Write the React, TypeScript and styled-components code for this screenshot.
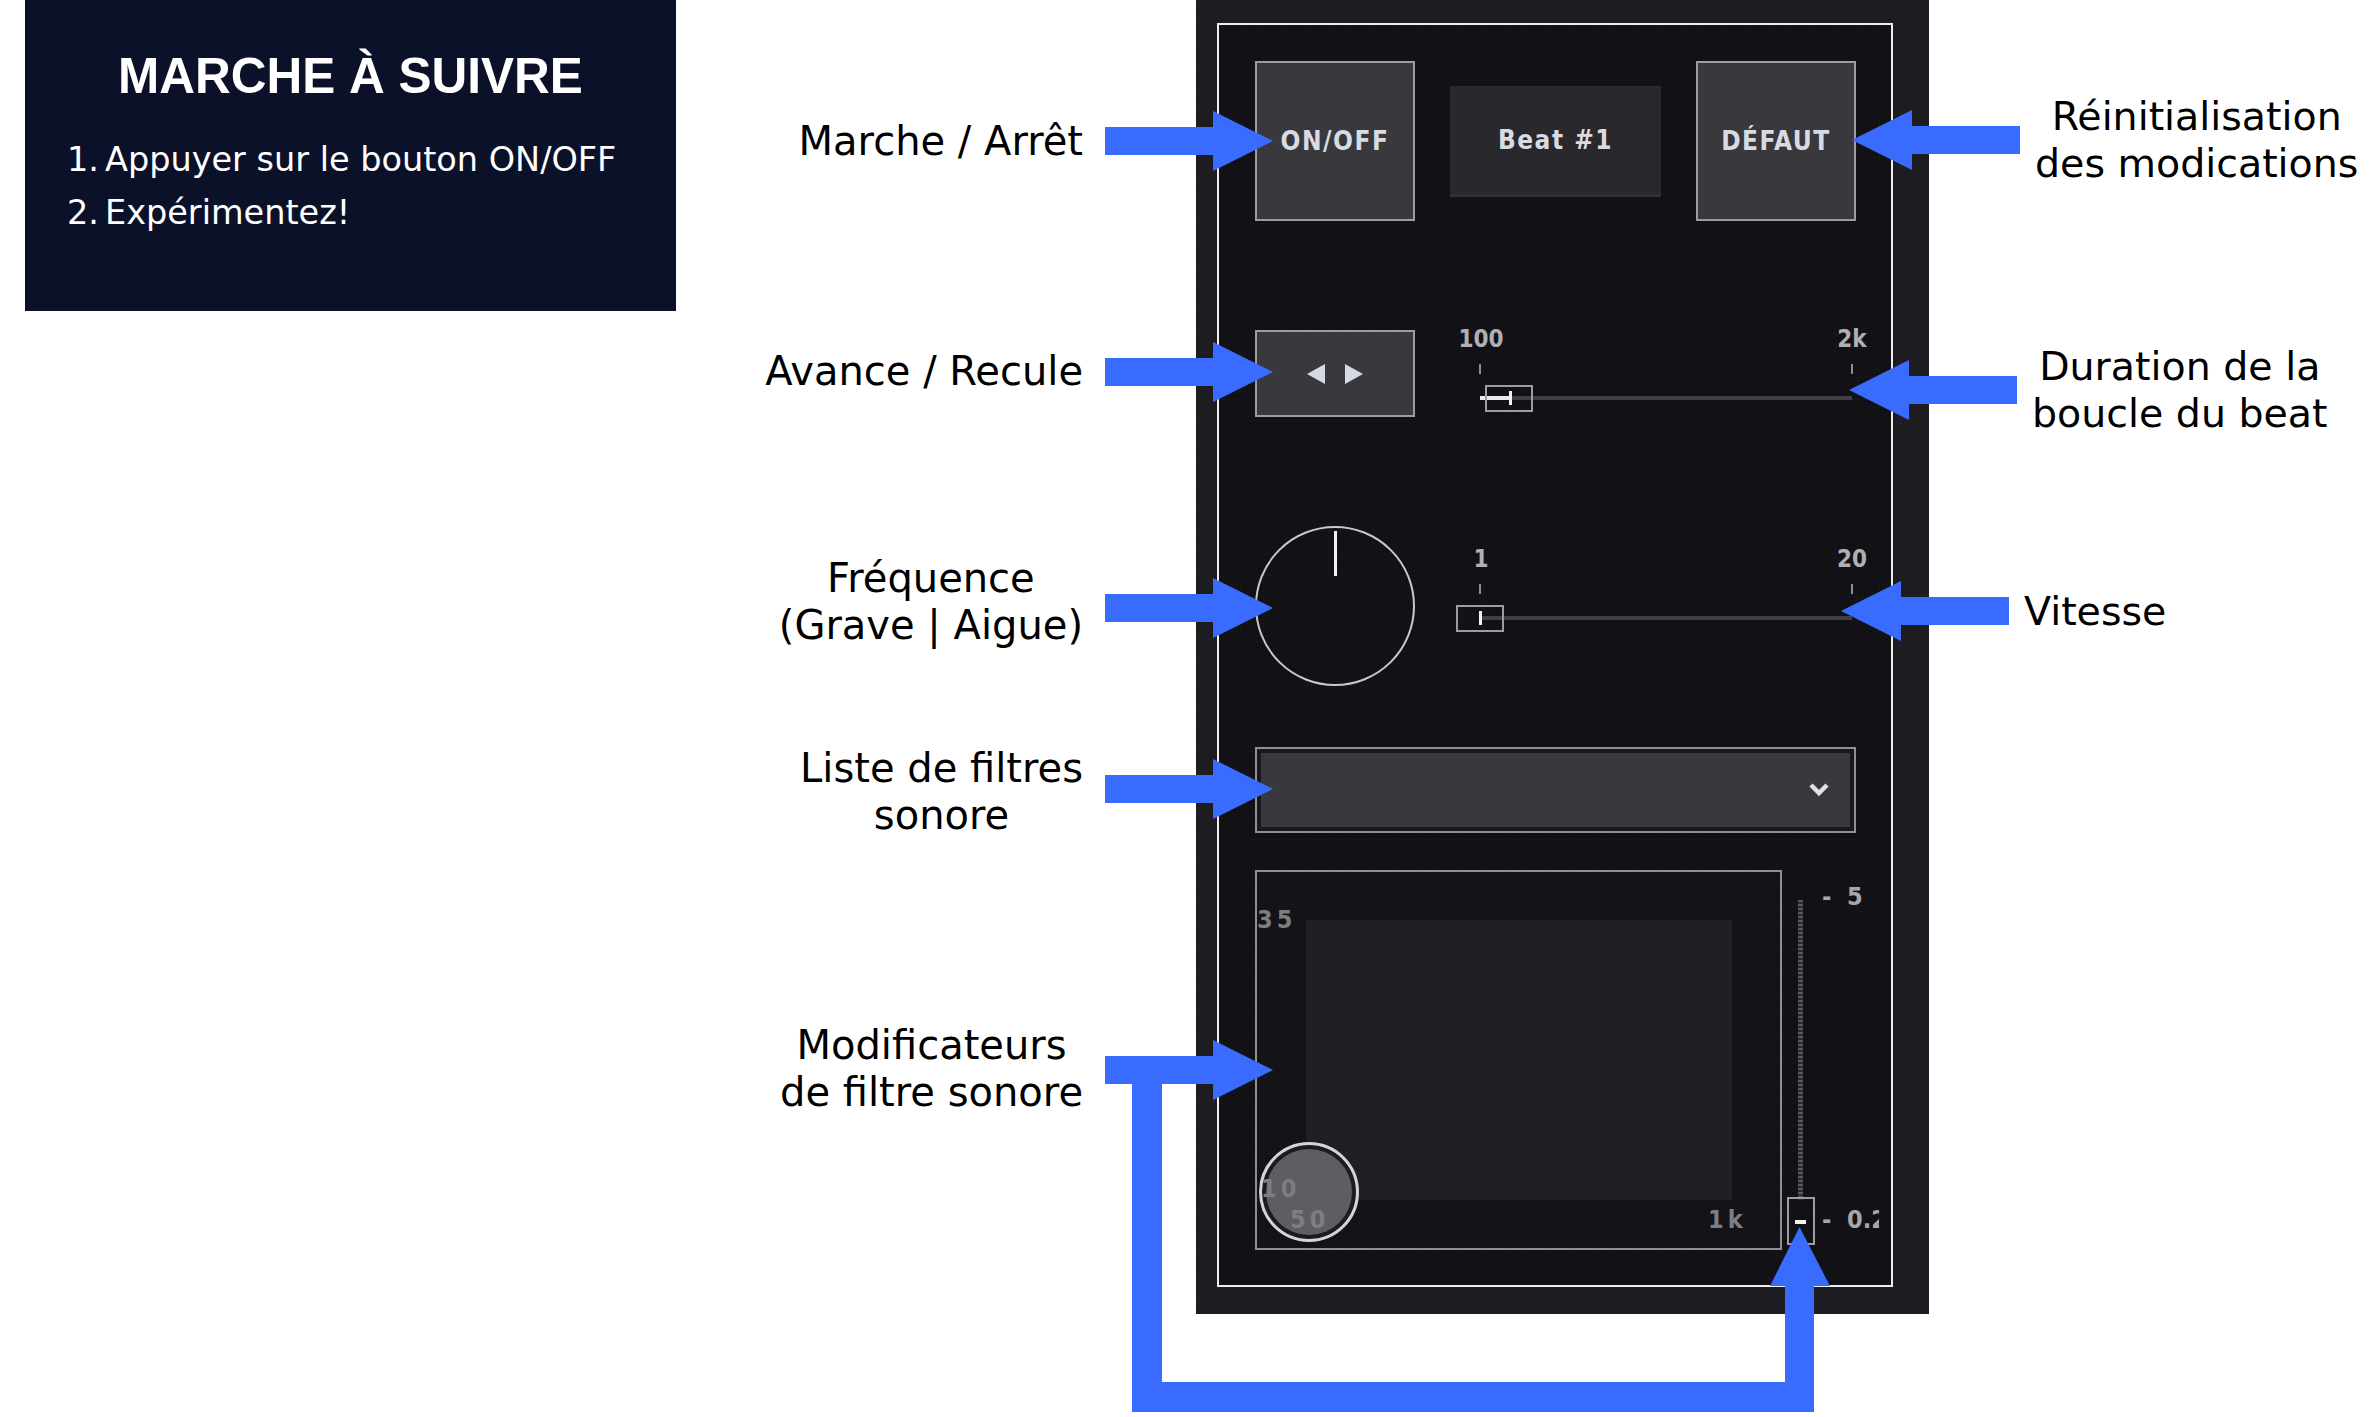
import styled, { createGlobalStyle } from 'styled-components'

const BLUE = '#386bfe'
const COND = `"DejaVu Sans Condensed", "DejaVu Sans", sans-serif`
const LABEL_FONT = `"DejaVu Sans", "Noto Sans", sans-serif`

// vertical tracks shared by the panel and the callout columns (absolute top, height)
const ROWS = [
  { top: 61, h: 160 },
  { top: 330, h: 87 },
  { top: 526, h: 160 },
  { top: 747, h: 86 },
  { top: 870, h: 380 },
]
const gapBefore = (i: number) => (i === 0 ? ROWS[0].top : ROWS[i].top - (ROWS[i - 1].top + ROWS[i - 1].h))

const GlobalStyle = createGlobalStyle`
  html, body {
    margin: 0;
    padding: 0;
    overflow: hidden;
    background: #ffffff;
  }
  body {
    width: 2376px;
    height: 1417px;
  }
`

const Page = styled.div`
  display: flex;
  align-items: flex-start;
  width: 2376px;
  height: 1417px;
`

const Instructions = styled.div`
  flex-shrink: 0;
  box-sizing: border-box;
  width: 651px;
  height: 311px;
  margin-left: 25px;
  padding: 46px 0 0 42px;
  background: #0b1129;
  color: #ffffff;
`

const Title = styled.h1`
  margin: 0 0 0 -42px;
  font-family: "Liberation Sans", Arial, sans-serif;
  font-weight: 700;
  font-size: 49.5px;
  line-height: 60px;
  text-align: center;
`

const Steps = styled.ol`
  list-style: none;
  margin: 27px 0 0;
  padding: 0;
  font-family: ${LABEL_FONT};
  font-size: 33.5px;
  line-height: 53px;
  white-space: nowrap;
`

const StepNum = styled.span`
  display: inline-block;
  width: 38px;
`

const Figure = styled.div`
  position: relative;
  display: flex;
  flex-shrink: 0;
  width: 1700px;
  height: 1417px;
`

const CalloutColumn = styled.div<{ $w: number }>`
  display: flex;
  flex-direction: column;
  flex-shrink: 0;
  width: ${({ $w }) => $w}px;
  overflow: visible;
`

const CalloutRow = styled.div<{ $gap: number; $h: number; $shift: number; $side: 'left' | 'right' }>`
  display: flex;
  align-items: center;
  justify-content: ${({ $side }) => ($side === 'left' ? 'flex-end' : 'flex-start')};
  gap: ${({ $side }) => ($side === 'left' ? 22 : 15)}px;
  box-sizing: border-box;
  height: ${({ $h }) => $h}px;
  margin-top: ${({ $gap }) => $gap}px;
  padding-top: ${({ $shift }) => ($shift > 0 ? $shift * 2 : 0)}px;
  padding-bottom: ${({ $shift }) => ($shift < 0 ? -$shift * 2 : 0)}px;
`

const Label = styled.div<{ $size: number; $lift: number }>`
  margin-bottom: ${({ $lift }) => ($lift > 0 ? $lift * 2 : 0)}px;
  margin-top: ${({ $lift }) => ($lift < 0 ? -$lift * 2 : 0)}px;
  font-family: ${LABEL_FONT};
  font-size: ${({ $size }) => $size}px;
  line-height: 47px;
  color: #000000;
  text-align: center;
  white-space: nowrap;
`

const ArrowSvg = styled.svg<{ $pull: number; $side: 'left' | 'right' }>`
  position: relative;
  z-index: 2;
  flex-shrink: 0;
  margin-right: ${({ $side, $pull }) => ($side === 'left' ? -$pull : 0)}px;
  margin-left: ${({ $side, $pull }) => ($side === 'right' ? -$pull : 0)}px;
`

const Arrow = ({ side, pull }: { side: 'left' | 'right'; pull: number }) => (
  <ArrowSvg $side={side} $pull={pull} width="168" height="60" viewBox="0 0 168 60">
    {side === 'left' ? (
      <polygon points="0,16 108,16 108,0 168,30 108,60 108,44 0,44" fill={BLUE} />
    ) : (
      <polygon points="168,16 60,16 60,0 0,30 60,60 60,44 168,44" fill={BLUE} />
    )}
  </ArrowSvg>
)

const LoopSvg = styled.svg`
  position: absolute;
  left: 456px;
  top: 1056px;
  z-index: 3;
`

/* ---------- panel ---------- */

const Panel = styled.div`
  flex-shrink: 0;
  box-sizing: border-box;
  width: 733px;
  height: 1314px;
  padding: 23px 36px 27px 21px;
  background-color: #1c1c21;
  background-image: linear-gradient(rgba(255, 255, 255, 0.02) 1px, transparent 1px),
    linear-gradient(90deg, rgba(255, 255, 255, 0.02) 1px, transparent 1px);
  background-size: 22px 22px;
`

const Frame = styled.div`
  display: flex;
  flex-direction: column;
  box-sizing: border-box;
  height: 100%;
  padding: ${ROWS[0].top - 25}px 35px 0 36px;
  border: 2px solid #ededed;
  background-color: #121216;
  background-image: linear-gradient(rgba(255, 255, 255, 0.015) 1px, transparent 1px),
    linear-gradient(90deg, rgba(255, 255, 255, 0.015) 1px, transparent 1px);
  background-size: 22px 22px;
`

const ControlRow = styled.div<{ $gap: number; $h: number; $align?: string }>`
  display: flex;
  align-items: ${({ $align }) => $align ?? 'center'};
  justify-content: space-between;
  height: ${({ $h }) => $h}px;
  margin-top: ${({ $gap }) => $gap}px;
`

const PadButton = styled.div<{ $h: number }>`
  display: flex;
  align-items: center;
  justify-content: center;
  gap: 20px;
  flex-shrink: 0;
  box-sizing: border-box;
  width: 160px;
  height: ${({ $h }) => $h}px;
  border: 2px solid #9d9da1;
  background: #38383d;
  color: #d9dbe3;
  font-family: ${COND};
  font-stretch: condensed;
  font-weight: 700;
  font-size: 26px;
  letter-spacing: 1.5px;
`

const BeatBox = styled.div`
  display: flex;
  align-items: center;
  justify-content: center;
  box-sizing: border-box;
  width: 211px;
  height: 111px;
  background: #28282d;
  border-bottom: 3px solid #303035;
  color: #d9dbe3;
  font-family: ${COND};
  font-stretch: condensed;
  font-weight: 700;
  font-size: 26px;
  letter-spacing: 1.5px;
`

const SliderBox = styled.div<{ $offset: number }>`
  position: relative;
  flex-shrink: 0;
  align-self: flex-start;
  width: 441px;
  height: 90px;
  margin-top: ${({ $offset }) => $offset}px;
`

const ScaleLabel = styled.span<{ $x: number }>`
  position: absolute;
  top: -1px;
  left: ${({ $x }) => $x}px;
  transform: translateX(-50%);
  font-family: ${COND};
  font-stretch: condensed;
  font-weight: 700;
  font-size: 24px;
  line-height: 20px;
  color: #afafb4;
`

const Tick = styled.span<{ $x: number }>`
  position: absolute;
  top: 34px;
  left: ${({ $x }) => $x - 1}px;
  width: 2px;
  height: 10px;
  background: #8e8e93;
`

const Track = styled.span`
  position: absolute;
  top: 66px;
  left: 65px;
  width: 372px;
  height: 4px;
  background: #3f3f44;
`

const TrackFill = styled.span<{ $w: number }>`
  position: absolute;
  top: 66px;
  left: 65px;
  width: ${({ $w }) => $w}px;
  height: 4px;
  background: #e9e9ea;
`

const Handle = styled.span<{ $x: number }>`
  position: absolute;
  top: 55px;
  left: ${({ $x }) => $x}px;
  box-sizing: border-box;
  width: 48px;
  height: 27px;
  border: 2px solid #9d9da1;
`

const HandleMark = styled.span<{ $x: number }>`
  position: absolute;
  top: 61px;
  left: ${({ $x }) => $x - 1}px;
  width: 3px;
  height: 14px;
  background: #f2f2f2;
`

type SliderProps = { min: string; max: string; offset: number; handle: number; mark: number; fill: number }

const HSlider = ({ min, max, offset, handle, mark, fill }: SliderProps) => (
  <SliderBox $offset={offset}>
    <ScaleLabel $x={66}>{min}</ScaleLabel>
    <ScaleLabel $x={437}>{max}</ScaleLabel>
    <Tick $x={65} />
    <Tick $x={437} />
    <Track />
    {fill > 0 && <TrackFill $w={fill} />}
    <Handle $x={65 + handle} />
    <HandleMark $x={65 + mark} />
  </SliderBox>
)

const Knob = styled.div`
  position: relative;
  flex-shrink: 0;
  box-sizing: border-box;
  width: 160px;
  height: 160px;
  border: 2px solid #c9c9cc;
  border-radius: 50%;

  &::after {
    content: '';
    position: absolute;
    top: 3px;
    left: 77px;
    width: 3px;
    height: 45px;
    background: #f2f2f2;
  }
`

const Select = styled.div`
  box-sizing: border-box;
  width: 100%;
  height: 86px;
  padding: 4px;
  border: 2px solid #909094;
  background: #19191d;
`

const SelectFace = styled.div`
  display: flex;
  align-items: center;
  justify-content: flex-end;
  height: 100%;
  padding-right: 18px;
  background: #38383d;
`

const XYPad = styled.div`
  position: relative;
  flex-shrink: 0;
  box-sizing: border-box;
  width: 527px;
  height: 380px;
  padding: 48px 48px 48px 49px;
  border: 2px solid #909094;
  background: #141418;
`

const PadSurface = styled.div`
  height: 100%;
  background: #1f1f24;
`

const AxisLabel = styled.span<{ $x: number; $y: number }>`
  position: absolute;
  z-index: 1;
  left: ${({ $x }) => $x}px;
  top: ${({ $y }) => $y}px;
  font-family: ${COND};
  font-stretch: condensed;
  font-weight: 700;
  font-size: 25px;
  line-height: 22px;
  letter-spacing: 4px;
  color: #7d7d82;
`

const PadHandle = styled.span`
  position: absolute;
  left: 2px;
  top: 270px;
  box-sizing: border-box;
  width: 100px;
  height: 100px;
  border: 3px solid #d4d4d7;
  border-radius: 50%;
  background: #5d5d63;
  box-shadow: inset 0 0 0 4px #1c1c20;
`

const VSlider = styled.div`
  position: relative;
  flex-shrink: 0;
  width: 97px;
  height: 380px;
  overflow: hidden;
`

const VTrack = styled.span`
  position: absolute;
  left: 16px;
  top: 30px;
  width: 5px;
  height: 300px;
  background: repeating-linear-gradient(to bottom, #5a5a60 0 2px, #2a2a2f 2px 4px);
`

const VHandle = styled.span`
  position: absolute;
  left: 5px;
  top: 327px;
  box-sizing: border-box;
  width: 28px;
  height: 48px;
  border: 2px solid #9d9da1;
`

const VMark = styled.span`
  position: absolute;
  left: 13px;
  top: 350px;
  width: 11px;
  height: 4px;
  background: #f2f2f2;
`

const VLabel = styled.span<{ $y: number }>`
  position: absolute;
  left: 40px;
  top: ${({ $y }) => $y}px;
  font-family: ${COND};
  font-stretch: condensed;
  font-weight: 700;
  font-size: 25px;
  line-height: 22px;
  color: #a6a6ab;
  white-space: pre;
`

const Triangle = ({ dir }: { dir: 'l' | 'r' }) => (
  <svg width="18" height="20" viewBox="0 0 18 20">
    <polygon points={dir === 'l' ? '18,0 18,20 0,10' : '0,0 0,20 18,10'} fill="#d5d9e5" />
  </svg>
)

const leftCallouts = [
  { lines: ['Marche / Arrêt'], shift: 0, lift: 0 },
  { lines: ['Avance / Recule'], shift: -2, lift: 0 },
  { lines: ['Fréquence', '(Grave | Aigue)'], shift: 2, lift: 6 },
  { lines: ['Liste de filtres', 'sonore'], shift: -1, lift: -3 },
  { lines: ['Modificateurs', 'de filtre sonore'], shift: 10, lift: 1 },
]

const rightCallouts = [
  { lines: ['Réinitialisation', 'des modications'], shift: -1, pull: 77, lift: 0 },
  { lines: ['Duration de la', 'boucle du beat'], shift: 16, pull: 80, lift: 0 },
  { lines: ['Vitesse'], shift: 5, pull: 88, lift: 0 },
]

export default function App() {
  return (
    <Page>
      <GlobalStyle />
      <Instructions>
        <Title>MARCHE À SUIVRE</Title>
        <Steps>
          <li>
            <StepNum>1.</StepNum>Appuyer sur le bouton ON/OFF
          </li>
          <li>
            <StepNum>2.</StepNum>Expérimentez!
          </li>
        </Steps>
      </Instructions>

      <Figure>
        <CalloutColumn $w={520}>
          {leftCallouts.map((c, i) => (
            <CalloutRow key={i} $side="left" $gap={gapBefore(i)} $h={ROWS[i].h} $shift={c.shift}>
              <Label $size={40} $lift={c.lift}>
                {c.lines.map((l) => (
                  <div key={l}>{l}</div>
                ))}
              </Label>
              <Arrow side="left" pull={77} />
            </CalloutRow>
          ))}
        </CalloutColumn>

        <Panel>
          <Frame>
            <ControlRow $gap={0} $h={ROWS[0].h}>
              <PadButton $h={160}>ON/OFF</PadButton>
              <BeatBox>Beat #1</BeatBox>
              <PadButton $h={160}>DÉFAUT</PadButton>
            </ControlRow>

            <ControlRow $gap={gapBefore(1)} $h={ROWS[1].h} $align="flex-start">
              <PadButton $h={87}>
                <Triangle dir="l" />
                <Triangle dir="r" />
              </PadButton>
              <HSlider min="100" max="2k" offset={0} handle={5} mark={30} fill={30} />
            </ControlRow>

            <ControlRow $gap={gapBefore(2)} $h={ROWS[2].h} $align="flex-start">
              <Knob />
              <HSlider min="1" max="20" offset={24} handle={-24} mark={0} fill={0} />
            </ControlRow>

            <ControlRow $gap={gapBefore(3)} $h={ROWS[3].h}>
              <Select>
                <SelectFace>
                  <svg width="26" height="18" viewBox="0 0 26 18">
                    <path d="M5 4 L13 12 L21 4" fill="none" stroke="#dfe2ea" strokeWidth="4.5" />
                  </svg>
                </SelectFace>
              </Select>
            </ControlRow>

            <ControlRow $gap={gapBefore(4)} $h={ROWS[4].h} $align="flex-start">
              <XYPad>
                <PadSurface />
                <AxisLabel $x={0} $y={37}>35</AxisLabel>
                <PadHandle />
                <AxisLabel $x={4} $y={306}>10</AxisLabel>
                <AxisLabel $x={33} $y={337}>50</AxisLabel>
                <AxisLabel $x={451} $y={337}>1k</AxisLabel>
              </XYPad>
              <VSlider>
                <VTrack />
                <VHandle />
                <VMark />
                <VLabel $y={16}>{'-  5'}</VLabel>
                <VLabel $y={339}>{'-  0.2'}</VLabel>
              </VSlider>
            </ControlRow>
          </Frame>
        </Panel>

        <CalloutColumn $w={447}>
          {rightCallouts.map((c, i) => (
            <CalloutRow key={i} $side="right" $gap={gapBefore(i)} $h={ROWS[i].h} $shift={c.shift}>
              <Arrow side="right" pull={c.pull} />
              <Label $size={39.5} $lift={c.lift}>
                {c.lines.map((l) => (
                  <div key={l}>{l}</div>
                ))}
              </Label>
            </CalloutRow>
          ))}
        </CalloutColumn>

        <LoopSvg width="700" height="358" viewBox="0 0 700 358">
          <polygon
            points="0,0 30,0 30,326 653,326 653,230 638,230 667.5,171 698,230 682,230 682,356 0,356"
            fill={BLUE}
          />
        </LoopSvg>
      </Figure>
    </Page>
  )
}
